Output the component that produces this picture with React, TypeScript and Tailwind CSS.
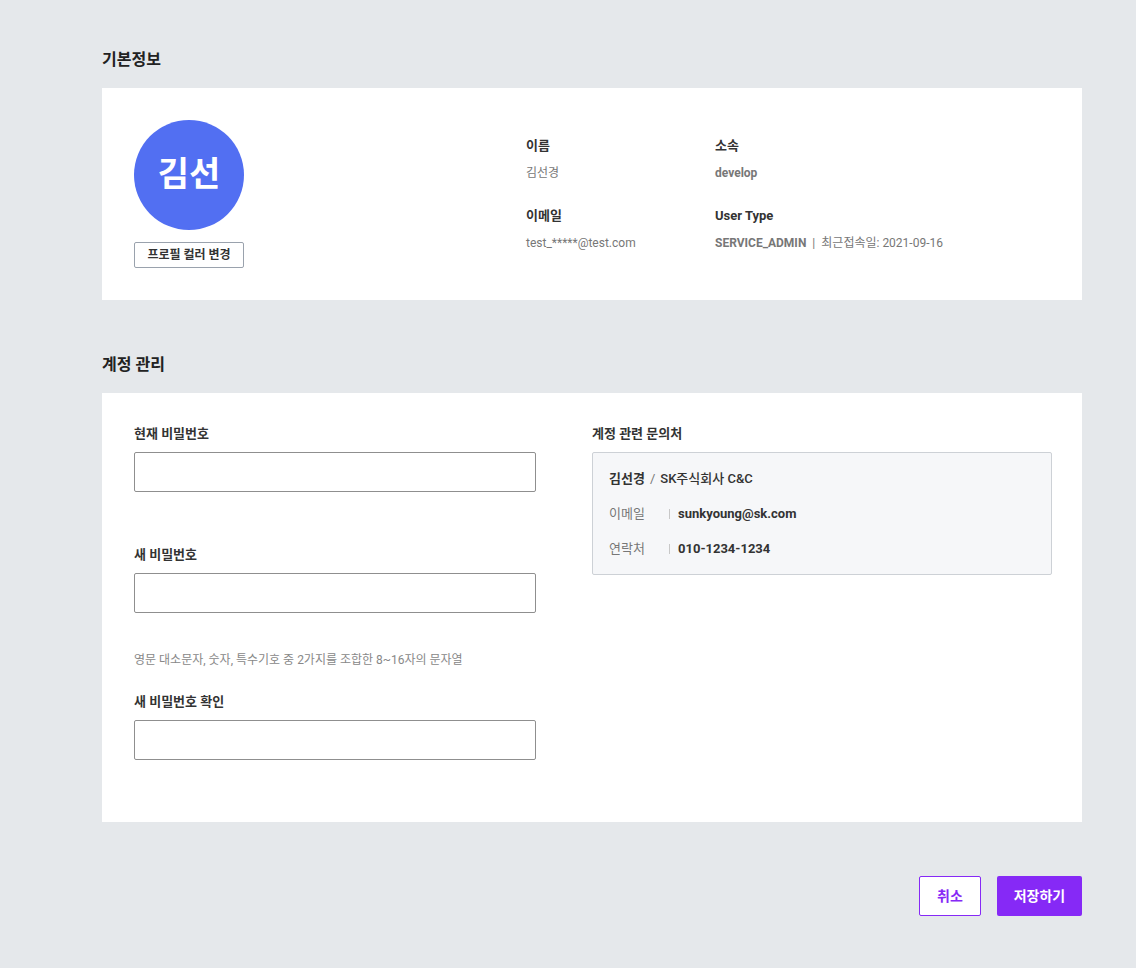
import React from "react";

const font = { fontFamily: 'Roboto, "Noto Sans CJK KR", "Noto Sans", sans-serif' };

function Field({ label, className = "" }: { label: string; className?: string }) {
  return (
    <div className={className}>
      <div className="text-[13px] leading-5 font-bold text-[#333]">{label}</div>
      <input type="password" className="mt-2 block h-10 w-[402px] rounded-[2px] border border-[#8f8f8f] bg-white outline-none" />
    </div>
  );
}

export default function App() {
  return (
    <div className="min-h-screen bg-[#e5e8eb]" style={font}>
      <div className="ml-[102px] w-[980px] pt-[50px] pb-[52px]">
        <h2 className="text-base leading-5 font-bold text-[#222]">기본정보</h2>
        <section className="mt-[18px] flex h-[212px] items-start bg-white pl-8 pt-8">
          <div className="flex w-[110px] flex-col items-center">
            <div className="flex h-[110px] w-[110px] items-center justify-center rounded-full bg-[#526ff2] pb-[2px] text-[34px] font-bold text-white">
              김선
            </div>
            <button className="mt-3 h-[26px] w-[110px] rounded-[2px] border border-[#9aa2ad] bg-white text-xs font-bold text-[#333]">
              프로필 컬러 변경
            </button>
          </div>
          <div className="ml-[282px] mt-[16px] grid grid-cols-[189px_auto] content-start gap-y-[23px]">
            <div>
              <div className="text-[13px] leading-5 font-bold text-[#333]">이름</div>
              <div className="mt-[7px] text-xs leading-5 text-[#777]">김선경</div>
            </div>
            <div>
              <div className="text-[13px] leading-5 font-bold text-[#333]">소속</div>
              <div className="mt-[7px] text-xs leading-5 font-bold text-[#777]">develop</div>
            </div>
            <div>
              <div className="text-[13px] leading-5 font-bold text-[#333]">이메일</div>
              <div className="mt-[7px] text-xs leading-5 text-[#777]">test_*****@test.com</div>
            </div>
            <div>
              <div className="text-[13px] leading-5 font-bold text-[#333]">User Type</div>
              <div className="mt-[7px] text-xs leading-5 text-[#777]">
                <span className="font-bold">SERVICE_ADMIN</span>
                <span className="mx-[6px]">|</span>
                최근접속일: 2021-09-16
              </div>
            </div>
          </div>
        </section>

        <h2 className="mt-[55px] text-base leading-5 font-bold text-[#222]">계정 관리</h2>
        <section className="mt-[18px] flex bg-white pl-8 pt-[31px] pb-[62px]">
          <div className="w-[402px]">
            <Field label="현재 비밀번호" />
            <Field label="새 비밀번호" className="mt-[53px]" />
            <div className="mt-[37px] text-xs leading-5 text-[#888]">
              영문 대소문자, 숫자, 특수기호 중 2가지를 조합한 8~16자의 문자열
            </div>
            <Field label="새 비밀번호 확인" className="mt-[22px]" />
          </div>
          <div className="ml-[56px] w-[460px]">
            <div className="text-[13px] leading-5 font-bold text-[#333]">계정 관련 문의처</div>
            <div className="mt-2 h-[123px] rounded-[2px] border border-[#cdd1d6] bg-[#f6f7f9] px-4 pt-4">
              <div className="text-[13px] leading-5 text-[#333]">
                <span className="font-bold">김선경</span>
                <span className="mx-[5px] text-[#777]">/</span>
                <span className="font-medium">SK주식회사 C&amp;C</span>
              </div>
              <div className="mt-[15px] flex items-center text-[13px] leading-5">
                <span className="w-[60px] text-[#777]">이메일</span>
                <span className="h-[10px] w-px bg-[#c8c8c8]" />
                <span className="ml-[8px] font-bold text-[#333]">sunkyoung@sk.com</span>
              </div>
              <div className="mt-[15px] flex items-center text-[13px] leading-5">
                <span className="w-[60px] text-[#777]">연락처</span>
                <span className="h-[10px] w-px bg-[#c8c8c8]" />
                <span className="ml-[8px] font-bold text-[#333]">010-1234-1234</span>
              </div>
            </div>
          </div>
        </section>

        <div className="mt-[54px] flex justify-end gap-4">
          <button className="h-10 w-[62px] rounded-[2px] border border-[#8629f6] bg-white text-sm font-bold text-[#8629f6]">
            취소
          </button>
          <button className="h-10 w-[85px] rounded-[2px] bg-[#8629f6] text-sm font-bold text-white">
            저장하기
          </button>
        </div>
      </div>
    </div>
  );
}
